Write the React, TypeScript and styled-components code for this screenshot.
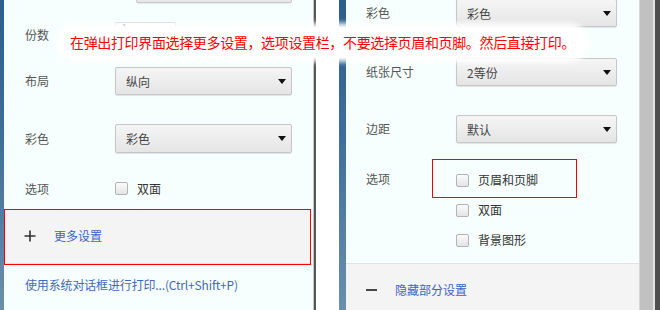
import React from "react";
import styled, { createGlobalStyle } from "styled-components";

const Global = createGlobalStyle`
  html, body { margin: 0; padding: 0; background: #fff; }
  body { font-family: "Noto Sans CJK SC", "Noto Sans", sans-serif; }
  * { box-sizing: border-box; }
`;

const Screen = styled.div`
  position: relative;
  width: 660px;
  height: 310px;
  display: flex;
  overflow: hidden;
  background: #fff;
`;

const BlueStrip = styled.div<{ $w: number }>`
  width: ${(p) => p.$w}px;
  flex: none;
  background: linear-gradient(180deg, #2a5e8c 0%, #3f6f98 45%, #6a8fae 100%);
`;

const Panel = styled.div<{ $w: number }>`
  width: ${(p) => p.$w}px;
  flex: none;
  display: flex;
  flex-direction: column;
  background: #f6fffd;
  position: relative;
`;

const PanelRim = styled.div`
  width: 3px;
  flex: none;
  background: linear-gradient(90deg, #c4c4c4 0 1px, #565656 1px 3px);
`;

const Gutter = styled.div`
  width: 23px;
  flex: none;
  background: #fff;
`;

const Scrollbar = styled.div`
  flex: 1;
  background: linear-gradient(
    90deg,
    #d8d8d8 0 1px,
    #c1c1c1 1px 14px,
    #e2e2e2 14px 16px,
    #4f4f4f 16px 100%
  );
`;

const Row = styled.div<{ $h: number; $mt: number; $pl: number }>`
  display: flex;
  align-items: center;
  height: ${(p) => p.$h}px;
  margin-top: ${(p) => p.$mt}px;
  padding-left: ${(p) => p.$pl}px;
  flex: none;
`;

const Label = styled.span`
  width: 90px;
  flex: none;
  font-size: 12px;
  color: #555;
  line-height: 16px;
`;

const TopBox = styled.div`
  height: 28px;
  width: 156px;
  margin-top: -25px;
  margin-left: 132px;
  border: 1px solid #c8c8c8;
  border-radius: 2px;
  background: linear-gradient(180deg, #f4f4f4, #e6e6e6);
  box-shadow: 0 1px 1px rgba(0, 0, 0, 0.08);
  flex: none;
`;

const NumberInput = styled.div`
  width: 61px;
  height: 26px;
  border: 1px solid #cfcfcf;
  border-radius: 2px;
  background: #fff;
  font-size: 12px;
  color: #444;
  padding-left: 5px;
  line-height: 10px;
`;

const SelectBox = styled.div<{ $w: number; $h: number }>`
  width: ${(p) => p.$w}px;
  height: ${(p) => p.$h}px;
  border: 1px solid #c6c6c6;
  border-radius: 2px;
  background: linear-gradient(180deg, #f5f5f5 0%, #e5e5e5 100%);
  box-shadow: 0 1px 1px rgba(0, 0, 0, 0.1);
  display: flex;
  align-items: center;
  justify-content: space-between;
  padding: 0 5px 0 10px;
  font-size: 12px;
  color: #444;
`;

const Caret = styled.span`
  width: 0;
  height: 0;
  border-left: 4px solid transparent;
  border-right: 4px solid transparent;
  border-top: 5px solid #111;
`;

const Check = styled.span`
  width: 13px;
  height: 13px;
  flex: none;
  border: 1px solid #b3b3b3;
  border-radius: 2px;
  background: linear-gradient(180deg, #fbfbfb, #e4e4e4);
  margin-right: 9px;
`;

const OptionText = styled.span`
  font-size: 12px;
  color: #333;
  line-height: 16px;
`;

const Section = styled.div<{ $mt: number; $h: number; $pl: number }>`
  position: relative;
  flex: none;
  height: ${(p) => p.$h}px;
  margin-top: ${(p) => p.$mt}px;
  padding-left: ${(p) => p.$pl}px;
  display: flex;
  align-items: center;
  background: #f4f4f4;
`;

const MoreSection = styled(Section)`
  border-bottom: 1px solid #e3e3e3;
  margin-right: 2px;
`;

const LessSection = styled(Section)`
  border-top: 1px solid #e2e2e2;
`;

const ToggleIcon = styled.svg`
  flex: none;
`;

const BlueLink = styled.span`
  font-size: 12px;
  color: #3d62c6;
  line-height: 16px;
  margin-left: 18px;
`;

const PrintLink = styled.span`
  font-size: 12px;
  color: #4665c0;
  line-height: 16px;
  letter-spacing: -0.15px;
`;

const Highlight = styled.div<{ $l: number; $t: number; $w: number; $h: number }>`
  position: absolute;
  left: ${(p) => p.$l}px;
  top: ${(p) => p.$t}px;
  width: ${(p) => p.$w}px;
  height: ${(p) => p.$h}px;
  border: 1.5px solid #f00;
  pointer-events: none;
`;

const OptionsRow = styled.div`
  display: flex;
  margin-top: 22px;
  padding-left: 20px;
  flex: none;
`;

const OptionsLabel = styled(Label)`
  line-height: 30px;
  height: 30px;
  margin-top: -1px;
`;

const OptionList = styled.div`
  display: flex;
  flex-direction: column;
`;

const OptionItem = styled.div`
  position: relative;
  display: flex;
  align-items: center;
  height: 30px;
`;

const Callout = styled.div`
  position: absolute;
  left: 60px;
  top: 27px;
  height: 31px;
  padding: 0 10px;
  border-radius: 16px;
  background: #fff;
  box-shadow: 0 0 5px 4px rgba(255, 255, 255, 0.95);
  color: #f00;
  font-size: 14px;
  letter-spacing: -0.35px;
  line-height: 31px;
  white-space: nowrap;
`;

const Plus = () => (
  <ToggleIcon width="12" height="12" viewBox="0 0 12 12">
    <path d="M6 0.5V11.5M0.5 6H11.5" stroke="#333" strokeWidth="1.6" />
  </ToggleIcon>
);

const Minus = () => (
  <ToggleIcon width="11" height="4" viewBox="0 0 11 4">
    <path d="M0 2H11" stroke="#333" strokeWidth="1.8" />
  </ToggleIcon>
);

const Select = ({ value, w, h }: { value: string; w: number; h: number }) => (
  <SelectBox $w={w} $h={h}>
    <span>{value}</span>
    <Caret />
  </SelectBox>
);

export default function App() {
  return (
    <>
      <Global />
      <Screen>
        <BlueStrip $w={4} />
        <Panel $w={309}>
          <TopBox />
          <Row $h={26} $mt={19} $pl={21}>
            <Label>份数</Label>
            <NumberInput>1</NumberInput>
          </Row>
          <Row $h={28} $mt={19} $pl={21}>
            <Label>布局</Label>
            <Select value="纵向" w={177} h={28} />
          </Row>
          <Row $h={29} $mt={29} $pl={21}>
            <Label>彩色</Label>
            <Select value="彩色" w={177} h={29} />
          </Row>
          <Row $h={13} $mt={29} $pl={21}>
            <Label>选项</Label>
            <Check />
            <OptionText>双面</OptionText>
          </Row>
          <MoreSection $mt={14} $h={55} $pl={20}>
            <Plus />
            <BlueLink>更多设置</BlueLink>
            <Highlight $l={0} $t={0} $w={307} $h={56} />
          </MoreSection>
          <Row $h={20} $mt={11} $pl={21}>
            <PrintLink>使用系统对话框进行打印...(Ctrl+Shift+P)</PrintLink>
          </Row>
        </Panel>
        <PanelRim />
        <Gutter />
        <BlueStrip $w={7} />
        <Panel $w={293}>
          <Row $h={28} $mt={-1} $pl={20}>
            <Label>彩色</Label>
            <Select value="彩色" w={161} h={28} />
          </Row>
          <Row $h={28} $mt={31} $pl={20}>
            <Label>纸张尺寸</Label>
            <Select value="2等份" w={161} h={28} />
          </Row>
          <Row $h={28} $mt={29} $pl={20}>
            <Label>边距</Label>
            <Select value="默认" w={161} h={28} />
          </Row>
          <OptionsRow>
            <OptionsLabel>选项</OptionsLabel>
            <OptionList>
              <OptionItem>
                <Check />
                <OptionText>页眉和页脚</OptionText>
                <Highlight $l={-24} $t={-6} $w={145} $h={39} />
              </OptionItem>
              <OptionItem>
                <Check />
                <OptionText>双面</OptionText>
              </OptionItem>
              <OptionItem>
                <Check />
                <OptionText>背景图形</OptionText>
              </OptionItem>
            </OptionList>
          </OptionsRow>
          <LessSection $mt={8} $h={52} $pl={20}>
            <Minus />
            <BlueLink>隐藏部分设置</BlueLink>
          </LessSection>
        </Panel>
        <Scrollbar />
        <Callout>在弹出打印界面选择更多设置，选项设置栏，不要选择页眉和页脚。然后直接打印。</Callout>
      </Screen>
    </>
  );
}
